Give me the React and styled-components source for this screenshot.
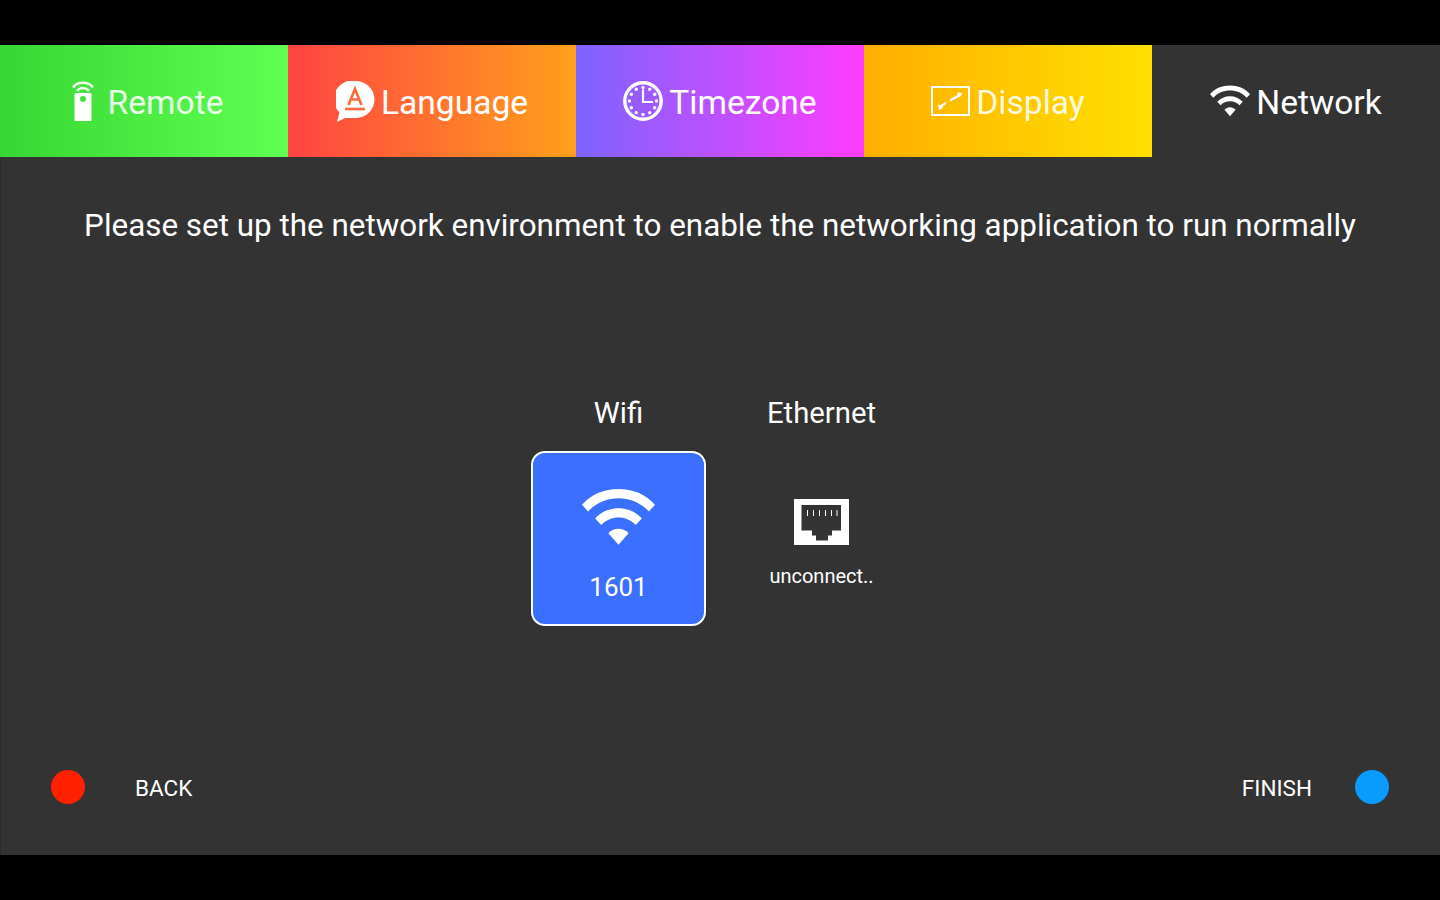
import React from "react";
import styled, { createGlobalStyle } from "styled-components";

const Global = createGlobalStyle`
  html, body {
    margin: 0;
    padding: 0;
    background: #000;
    font-family: Roboto, "Liberation Sans", sans-serif;
    color: #fff;
  }
`;

const Screen = styled.div`
  width: 1440px;
  height: 900px;
  padding: 45px 0;
  box-sizing: border-box;
  overflow: hidden;
`;

const Panel = styled.div`
  height: 810px;
  background: #333333;
  box-shadow: inset 1px 0 0 #2b2b2b;
  display: flex;
  flex-direction: column;
`;

const Tabs = styled.div`
  display: grid;
  grid-template-columns: repeat(5, 288px);
  height: 112px;
  flex: none;
`;

const Tab = styled.div`
  background: ${(props) => props.bg};
  display: flex;
  align-items: center;
  justify-content: center;
  gap: ${(props) => props.gap}px;
  padding-left: ${(props) => props.shift}px;
  box-sizing: border-box;
  color: ${(props) => props.dim ? "rgba(255,255,255,0.88)" : "#fff"};
`;

const TabLabel = styled.span`
  font-size: 33.6px;
  line-height: 40px;
  padding-top: 4px;
`;

const Message = styled.div`
  margin-top: 49px;
  height: 40px;
  text-align: center;
  font-size: 31.4px;
  line-height: 40px;
  white-space: nowrap;
`;

const Options = styled.div`
  margin-top: 147px;
  padding-left: 531px;
  display: flex;
  gap: 28px;
  height: 248px;
  flex: none;
`;

const Option = styled.div`
  width: 175px;
  display: flex;
  flex-direction: column;
  align-items: center;
`;

const OptionTitle = styled.div`
  font-size: 29.3px;
  line-height: 40px;
  height: 40px;
  margin-bottom: 18px;
  white-space: nowrap;
`;

const Card = styled.div`
  width: 175px;
  height: 175px;
  box-sizing: border-box;
  display: flex;
  flex-direction: column;
  align-items: center;
  border-radius: 14px;
  border: ${(props) => props.active ? "2px solid #fff" : "2px solid transparent"};
  background: ${(props) => props.active ? "#3a6fff" : "transparent"};
  padding-top: ${(props) => props.active ? 35 : 46}px;
`;

const CardLabel = styled.div`
  font-size: ${(props) => props.small ? 20 : 26}px;
  line-height: 32px;
  margin-top: ${(props) => props.small ? 15 : 26}px;
  white-space: nowrap;
`;

const Footer = styled.div`
  margin-top: auto;
  margin-bottom: 51px;
  padding: 0 51px;
  display: flex;
  justify-content: space-between;
  align-items: center;
  height: 34px;
`;

const FooterSide = styled.div`
  display: flex;
  align-items: center;
  gap: ${(props) => props.gap}px;
`;

const Dot = styled.div`
  width: 34px;
  height: 34px;
  border-radius: 50%;
  background: ${(props) => props.color};
`;

const FooterLabel = styled.div`
  font-size: 22.5px;
  line-height: 30px;
  padding-top: 2px;
`;

function WifiIcon({ size }) {
  return (
    <svg width={size} height={size * 0.78} viewBox="0 0 72 56" fill="#fff">
      <path d="M0 16.500C9.500 6 22 1 36 1s26.500 5 36 15.500l-6 6.500C58 14.500 47.500 10 36 10S14 14.500 6 23z" />
      <path d="M13 30C19 23.500 27 20 36 20s17 3.500 23 10l-6 6.500C48.500 31.500 42.500 29 36 29s-12.500 2.500-17 7.500z" />
      <path d="M26 44.500C28.500 41.500 32 40 36 40s7.500 1.500 10 4.500L36 56z" />
    </svg>
  );
}

function RemoteIcon() {
  return (
    <svg width="24" height="40" viewBox="0 0 24 40" fill="none">
      <path d="M2 6.500C4.500 3 8 1.800 12 1.800s7.500 1.200 10 4.700" stroke="#fff" strokeWidth="2.600" strokeOpacity=".92" />
      <path d="M6 10C7.500 8 9.500 7 12 7s4.500 1 6 3" stroke="#fff" strokeWidth="2.600" strokeOpacity=".92" />
      <path fillRule="evenodd" clipRule="evenodd" d="M3.500 13.500c0-.8.7-1.500 1.500-1.500h14c.8 0 1.500.7 1.500 1.500V39c0 .6-.4 1-1 1H4.500c-.6 0-1-.4-1-1zM12 15a3 3 0 1 0 0 6a3 3 0 0 0 0-6z" fill="#fff" />
    </svg>
  );
}

function LanguageIcon() {
  return (
    <svg width="39" height="41" viewBox="0 0 39 41">
      <path fill="#fff" d="M20 0a18.500 18.500 0 0 1 0 37H9l-8 4 2.500-9.500A18.500 18.500 0 0 1 20 0z" />
      <path fill="none" stroke="#ff6a3c" strokeWidth="2.600" d="M12.500 24 19 8l6.500 16M15 18.500h9" />
      <path stroke="#ff6a3c" strokeWidth="2.600" d="M9 28h20" />
    </svg>
  );
}

function ClockIcon() {
  const ticks = [0, 30, 60, 90, 120, 150, 180, 210, 240, 270, 300, 330];
  return (
    <svg width="40" height="40" viewBox="0 0 40 40">
      <circle cx="20" cy="20" r="18.200" fill="none" stroke="#fff" strokeWidth="3.400" />
      {ticks.map((a) => (
        <circle
          key={a}
          cx={20 + 13.500 * Math.cos((a * Math.PI) / 180)}
          cy={20 + 13.500 * Math.sin((a * Math.PI) / 180)}
          r="1.700"
          fill="#fff"
        />
      ))}
      <path d="M20 8.500V21h10" fill="none" stroke="#fff" strokeWidth="2.200" />
    </svg>
  );
}

function DisplayIcon() {
  return (
    <svg width="39" height="30" viewBox="0 0 39 30" fill="none" stroke="#fff">
      <rect x="1" y="1" width="37" height="28" strokeWidth="2" />
      <path d="M9 20.500l6-3.500M19 14.500 28 9.500" strokeWidth="2.400" />
      <path d="M7.500 19l1 4.500 3.500-2.500zM31 7.500l-4.500-.5 2 4z" fill="#fff" strokeWidth="1" />
    </svg>
  );
}

function EthernetIcon() {
  return (
    <svg width="55" height="46" viewBox="0 0 55 46">
      <rect width="55" height="46" fill="#fff" />
      <path fill="#333" d="M7.500 6H47v25.500h-9v5h-4v5H22v-5h-4v-5H7.500z" />
      <path stroke="#fff" strokeWidth="1" d="M13.500 11v6M19.500 11v6M25.500 11v6M31.500 11v6M37.500 11v6M43 11v6" />
    </svg>
  );
}

const tabs = [
  { label: "Remote", bg: "linear-gradient(90deg,#36d733,#61ff52)", icon: <RemoteIcon />, gap: 13, shift: 6, dim: true },
  { label: "Language", bg: "linear-gradient(90deg,#ff4343,#ffa01c)", icon: <LanguageIcon />, gap: 6, shift: 0 },
  { label: "Timezone", bg: "linear-gradient(90deg,#7d63ff,#ff3dff)", icon: <ClockIcon />, gap: 6, shift: 0 },
  { label: "Display", bg: "linear-gradient(90deg,#ffae00,#ffe000)", icon: <DisplayIcon />, gap: 6, shift: 0, dim: true },
  { label: "Network", bg: "#333333", icon: <WifiIcon size={40} />, gap: 6, shift: 0 },
];

export default function App() {
  return (
    <>
      <Global />
      <Screen>
        <Panel>
          <Tabs>
            {tabs.map((t) => (
              <Tab key={t.label} bg={t.bg} gap={t.gap} shift={t.shift} dim={t.dim}>
                {t.icon}
                <TabLabel>{t.label}</TabLabel>
              </Tab>
            ))}
          </Tabs>
          <Message>Please set up the network environment to enable the networking application to run normally</Message>
          <Options>
            <Option>
              <OptionTitle>Wifi</OptionTitle>
              <Card active>
                <WifiIcon size={73} />
                <CardLabel>1601</CardLabel>
              </Card>
            </Option>
            <Option>
              <OptionTitle>Ethernet</OptionTitle>
              <Card>
                <EthernetIcon />
                <CardLabel small>unconnect..</CardLabel>
              </Card>
            </Option>
          </Options>
          <Footer>
            <FooterSide gap={50}>
              <Dot color="#ff2000" />
              <FooterLabel>BACK</FooterLabel>
            </FooterSide>
            <FooterSide gap={43}>
              <FooterLabel>FINISH</FooterLabel>
              <Dot color="#0a9bff" />
            </FooterSide>
          </Footer>
        </Panel>
      </Screen>
    </>
  );
}
